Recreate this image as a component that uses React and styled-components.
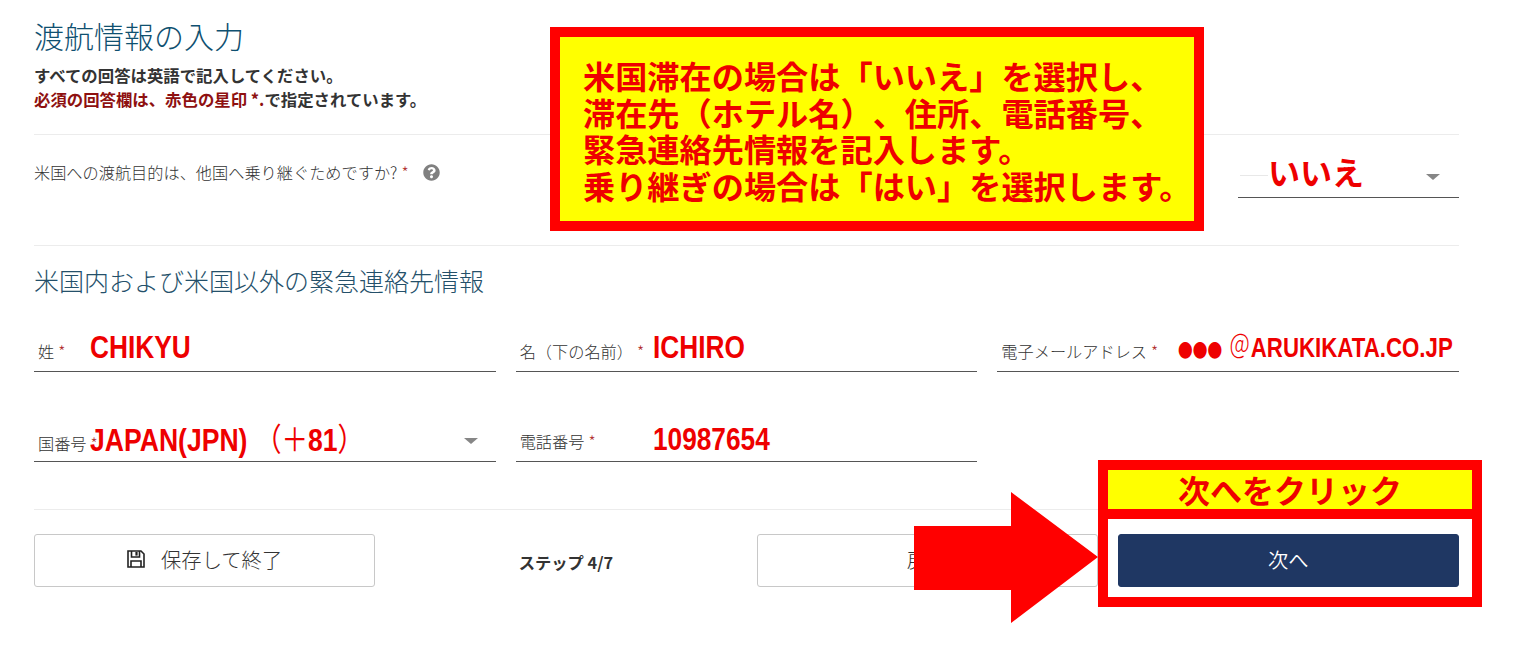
import React from "react";
import styled, { createGlobalStyle } from "styled-components";
import { FaQuestionCircle } from "react-icons/fa";

const JP = `"Noto Sans CJK JP", "Noto Sans", sans-serif`;
const LATIN = `"Liberation Sans", "Noto Sans CJK JP", sans-serif`;

const Global = createGlobalStyle`
  html, body { margin: 0; padding: 0; background: #fff; }
  body { font-family: ${JP}; color: #333; overflow: hidden; text-spacing-trim: space-all; }
  * { box-sizing: border-box; }
`;

const Page = styled.div`
  position: relative;
  width: 1536px;
  height: 650px;
  padding: 14px 77px 0 34px;
  overflow: hidden;
`;
const Title = styled.h1`
  margin: 0;
  height: 42px;
  font-size: 30px;
  line-height: 42px;
  font-weight: 300;
  color: #0f5070;
`;
const Notice = styled.p`
  margin: 0;
  font-size: 16.4px;
  line-height: 24px;
  font-weight: 700;
  color: #333;
  &:first-of-type { margin-top: 7px; }
  span { color: #8e1010; }
`;
const HeaderBlock = styled.header`
  height: 120px;
`;
const Rule = styled.hr`
  margin: 0;
  border: 0;
  border-top: 1px solid #ececec;
`;
const QuestionRow = styled.section`
  height: 110px;
  display: flex;
  justify-content: space-between;
  align-items: flex-start;
`;
const Question = styled.div`
  margin-top: 25px;
  display: flex;
  align-items: center;
  font-size: 16.2px;
  line-height: 24px;
  font-weight: 300;
  color: #333;
  svg { margin-left: 14px; color: #808080; font-size: 17px; }
`;
const Star = styled.span`
  color: #b02a2a;
  margin-left: 4px;
`;
const SelectBox = styled.div`
  position: relative;
  width: 221px;
  height: 63px;
  border-bottom: 1px solid #555;
  display: flex;
  align-items: flex-end;
  padding: 0 0 6px 30px;
`;
const SelectValue = styled.div`
  font-size: 32px;
  line-height: 40px;
  font-weight: 700;
  color: #ee0000;
`;
const FaintLine = styled.i`
  position: absolute;
  left: 2px;
  top: 40px;
  width: 28px;
  border-top: 1px solid #e8e8e8;
`;
const Caret = styled.i`
  position: absolute;
  right: ${(p) => p.$right}px;
  bottom: ${(p) => p.$bottom}px;
  width: 0;
  height: 0;
  border-left: 7px solid transparent;
  border-right: 7px solid transparent;
  border-top: 6px solid #868686;
`;
const SectionTitle = styled.h2`
  margin: 0;
  padding-top: 16px;
  height: 76px;
  font-size: 25px;
  line-height: 36px;
  font-weight: 300;
  color: #24506a;
`;
const FieldGrid = styled.section`
  display: grid;
  grid-template-columns: repeat(3, minmax(0, 1fr));
  grid-auto-rows: 50px;
  column-gap: 20px;
  row-gap: 40px;
  height: 187px;
`;
const Field = styled.div`
  position: relative;
  min-width: 0;
  display: grid;
  grid-template-columns: ${(p) => p.$labelWidth}px 1fr;
  align-items: end;
  border-bottom: 1px solid #555;
  white-space: nowrap;
`;
const FieldLabel = styled.label`
  padding: 0 0 ${(p) => p.$pb ?? 8}px 4px;
  font-size: 16.2px;
  line-height: 24px;
  font-weight: 300;
  color: #333;
  width: 0;
`;
const FieldValue = styled.div`
  font-family: ${LATIN};
  font-size: ${(p) => p.$size || 32}px;
  line-height: 40px;
  padding-bottom: ${(p) => p.$pb ?? 4}px;
  font-weight: 700;
  color: #ee0000;
  transform: scaleX(${(p) => p.$scale || 0.82});
  transform-origin: left center;
  position: relative;
`;
const ThinGlyph = styled.span`
  font-family: ${JP};
  font-weight: ${(p) => p.$weight || 400};
  font-size: ${(p) => (p.$size ? `${p.$size}px` : "inherit")};
  margin-left: ${(p) => p.$ml || 0}px;
`;
const Footer = styled.footer`
  display: grid;
  grid-template-columns: repeat(4, minmax(0, 1fr));
  column-gap: 20px;
  padding-top: 24px;
  align-items: center;
`;
const Button = styled.button`
  height: 53px;
  display: flex;
  align-items: center;
  justify-content: center;
  gap: 16px;
  padding: 0 0 3px;
  border-radius: 3px;
  border: 1px solid ${(p) => (p.$primary ? "#1f3763" : "#c8c8c8")};
  background: ${(p) => (p.$primary ? "#1f3763" : "#fff")};
  color: ${(p) => (p.$primary ? "#fff" : "#333")};
  font-family: ${JP};
  font-size: 20.3px;
  font-weight: ${(p) => (p.$primary ? 350 : 300)};
`;
const Step = styled.div`
  text-align: center;
  font-size: 16.3px;
  font-weight: 700;
  color: #333;
  padding-top: 3px;
`;

/* Annotations laid over the page */
const Callout = styled.aside`
  position: absolute;
  left: 550px;
  top: 27px;
  width: 654px;
  height: 204px;
  border: 10px solid #ff0000;
  background: #ffff00;
  padding: 20px 0 0 23px;
  font-size: 32.2px;
  line-height: 36.6px;
  font-weight: 700;
  color: #ee0000;
  white-space: pre;
`;
const ClickBox = styled.div`
  position: absolute;
  left: 1098px;
  top: 460px;
  width: 384px;
  height: 147px;
  border: 10px solid #ff0000;
  display: flex;
  flex-direction: column;
`;
const ClickHead = styled.div`
  height: 39px;
  background: #ffff00;
  text-align: center;
  font-size: 32px;
  line-height: 39px;
  font-weight: 700;
  color: #ee0000;
`;
const ClickSep = styled.div`
  height: 10px;
  background: #ff0000;
`;
const Arrow = styled.svg`
  position: absolute;
  left: 914px;
  top: 492px;
`;

const SaveIcon = () => (
  <svg width="18" height="18" viewBox="0 0 18 18" fill="none" stroke="#222" strokeWidth="1.6">
    <path d="M1 1h13l3 3v13H1z" />
    <path d="M4.5 1v6h8V1" />
    <path d="M9.5 2v3.6" strokeWidth="2.2" />
    <path d="M4 17v-6h10v6" />
  </svg>
);

export default function App() {
  return (
    <Page>
      <Global />
      <HeaderBlock>
        <Title>渡航情報の入力</Title>
        <Notice>すべての回答は英語で記入してください。</Notice>
        <Notice><span>必須の回答欄は、赤色の星印 *.</span>で指定されています。</Notice>
      </HeaderBlock>
      <Rule />
      <QuestionRow>
        <Question>
          米国への渡航目的は、他国へ乗り継ぐためですか?<Star>*</Star>
          <FaQuestionCircle />
        </Question>
        <SelectBox>
          <FaintLine />
          <SelectValue>いいえ</SelectValue>
          <Caret $right={19} $bottom={17} />
        </SelectBox>
      </QuestionRow>
      <Rule />
      <SectionTitle>米国内および米国以外の緊急連絡先情報</SectionTitle>
      <FieldGrid>
        <Field $labelWidth={56}>
          <FieldLabel>姓<Star>*</Star></FieldLabel>
          <FieldValue>CHIKYU</FieldValue>
        </Field>
        <Field $labelWidth={137}>
          <FieldLabel>名（下の名前）<Star>*</Star></FieldLabel>
          <FieldValue>ICHIRO</FieldValue>
        </Field>
        <Field $labelWidth={181}>
          <FieldLabel>電子メールアドレス<Star>*</Star></FieldLabel>
          <FieldValue $size={28} $scale={0.795} $pb={2}>
            <ThinGlyph $size={18.5}>●●●</ThinGlyph>
            <ThinGlyph $size={28} $weight={300} $ml={8}>＠</ThinGlyph>ARUKIKATA.CO.JP
          </FieldValue>
        </Field>
        <Field $labelWidth={56}>
          <FieldLabel $pb={6}>国番号<Star>*</Star></FieldLabel>
          <FieldValue $pb={1} $scale={0.83}>
            JAPAN(JPN)<ThinGlyph $ml={9}>（＋</ThinGlyph>81<ThinGlyph>）</ThinGlyph>
          </FieldValue>
          <Caret $right={18} $bottom={17} />
        </Field>
        <Field $labelWidth={137}>
          <FieldLabel $pb={8}>電話番号<Star>*</Star></FieldLabel>
          <FieldValue $pb={2}>10987654</FieldValue>
        </Field>
      </FieldGrid>
      <Rule />
      <Footer>
        <Button><SaveIcon />保存して終了</Button>
        <Step>ステップ 4/7</Step>
        <Button>戻る</Button>
        <Button $primary>次へ</Button>
      </Footer>
      <Callout>{"米国滞在の場合は「いいえ」を選択し、\n滞在先（ホテル名）、住所、電話番号、\n緊急連絡先情報を記入します。\n乗り継ぎの場合は「はい」を選択します。"}</Callout>
      <Arrow width="184" height="131" viewBox="0 0 184 131">
        <polygon points="0,34 97,34 97,0 184,65 97,131 97,98 0,98" fill="#ff0000" />
      </Arrow>
      <ClickBox>
        <ClickHead>次へをクリック</ClickHead>
        <ClickSep />
      </ClickBox>
    </Page>
  );
}
